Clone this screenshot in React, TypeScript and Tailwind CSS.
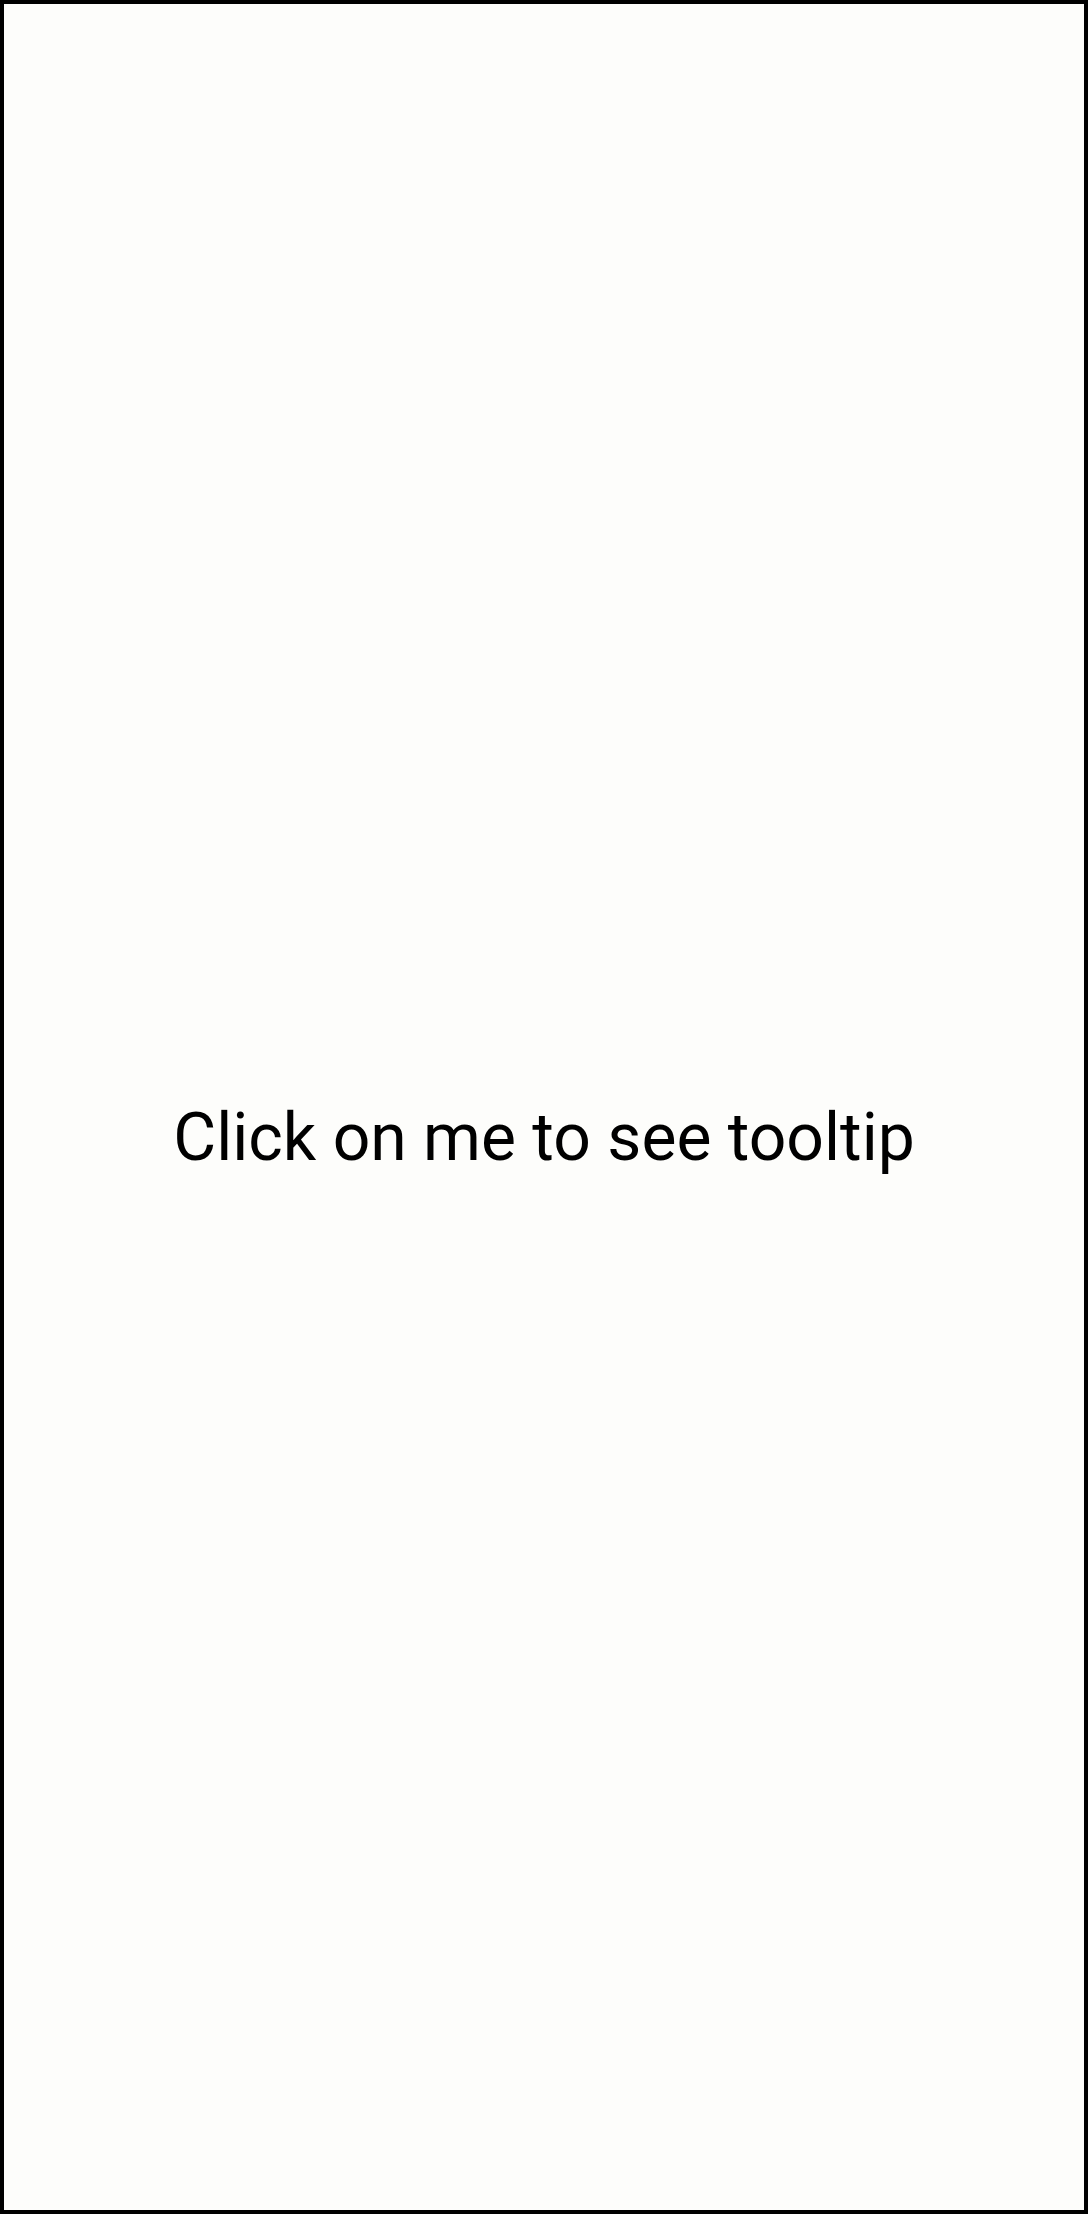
export default function App() {
  return (
    <div className="w-[1088px] h-[2214px] border-4 border-black bg-[#fdfdfb] flex flex-col items-center">
      {/* tooltip trigger */}
      <button
        type="button"
        className="mt-[1095px] text-[66px] leading-[77px] text-black"
        style={{ fontFamily: "Roboto, 'Liberation Sans', sans-serif" }}
      >
        Click on me to see tooltip
      </button>
    </div>
  );
}
